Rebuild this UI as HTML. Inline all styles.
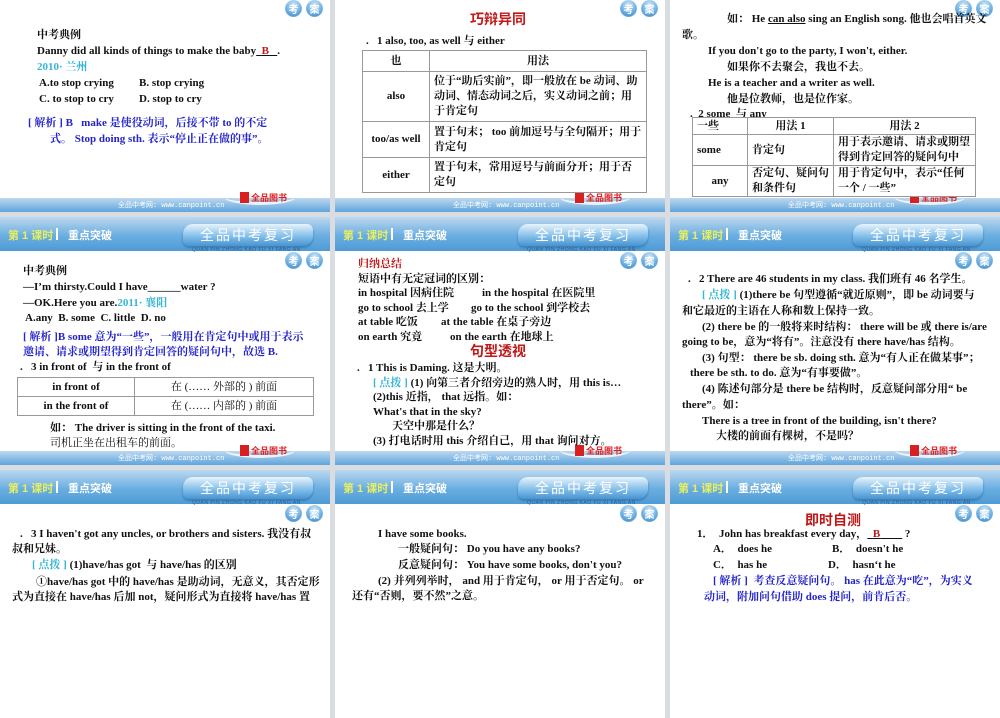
<!DOCTYPE html>
<html><head><meta charset="utf-8"><style>
body{margin:0;width:1000px;height:600px;overflow:hidden;background:#d9dde2;position:relative}
.s{position:absolute;background:#fff;overflow:hidden;width:330px}
.hd{position:absolute;left:0;top:0;width:330px;height:34px;background:linear-gradient(#bcd8ef,#6aaee0 55%,#4f9bd6)}
.hd .a{position:absolute;left:8px;top:10px;font:bold 11px "Liberation Sans","Noto Sans CJK SC",sans-serif;color:#e8f060}
.hd .b{position:absolute;left:68px;top:10px;font:bold 11px "Liberation Sans","Noto Sans CJK SC",sans-serif;color:#fff}
.hd .bar{position:absolute;left:56px;top:11px;width:2px;height:12px;background:#fff}
.pill{position:absolute;left:183px;top:7px;width:130px;height:22px;border-radius:10px 6px 10px 6px;background:linear-gradient(#e8f4fc,#7cbbe8 60%,#4a94d0);font:14px "Noto Sans CJK SC",sans-serif;color:#fff;text-align:center;line-height:22px;letter-spacing:2px;box-shadow:0 2px 2px #3a7fb8}
.sm{position:absolute;left:192px;top:30px;font:5px "Liberation Sans",sans-serif;color:#2a5f9a;letter-spacing:.5px}
.ic{position:absolute;width:17px;height:17px;border-radius:50%;background:radial-gradient(circle at 50% 30%,#d8ecfa,#6aaee2 55%,#2f7cc0);font:bold 10px "Noto Sans CJK SC",sans-serif;color:#fff;text-align:center;line-height:17px;box-shadow:0 0 1px #fff inset}
.ft{position:absolute;left:0;width:330px;height:14px;background:linear-gradient(#bcd8ef,#5fa5dd)}
.ft .u{position:absolute;left:118px;top:2px;font:7px "Liberation Mono","Noto Sans CJK SC",monospace;color:#fff}
.ft .lg{position:absolute;left:240px;top:-6px;width:50px;height:14px;font:bold 9px "Noto Sans CJK SC",sans-serif;color:#e02020;line-height:12px}
.ft .lg i{display:inline-block;width:9px;height:11px;background:#d82020;vertical-align:-2px;margin-right:2px}
.ft .w{position:absolute;left:225px;top:-8px;width:70px;height:12px;border-radius:50%;border-bottom:3px solid #fff;opacity:.8}
.t{position:absolute;white-space:nowrap;font:bold 11px/16px "Liberation Serif","Noto Serif CJK SC",serif;color:#111}
.r{color:#c01818;font:bold 14px/18px "Liberation Sans","Noto Sans CJK SC",sans-serif}
.bl{color:#2424c8}.cy{color:#35b5d5}
table{position:absolute;border-collapse:collapse;font:bold 11px/15px "Liberation Serif","Noto Serif CJK SC",serif;color:#111}
td{border:1px solid #999;padding:0 4px;vertical-align:middle}
</style></head><body>

<div class="s" style="left:0;top:-36px;height:248px"><div class="ft" style="top:234px"><div class="w"></div><div class="u">全品中考网: www.canpoint.cn</div><div class="lg"><i></i>全品图书</div></div></div>
<div class="s" style="left:335px;top:-36px;height:248px"><div class="ft" style="top:234px"><div class="w"></div><div class="u">全品中考网: www.canpoint.cn</div><div class="lg"><i></i>全品图书</div></div></div>
<div class="s" style="left:670px;top:-36px;height:248px"><div class="ft" style="top:234px"><div class="w"></div><div class="u">全品中考网: www.canpoint.cn</div><div class="lg"><i></i>全品图书</div></div></div>

<div class="s" style="left:0;top:217px;height:248px"><div class="hd"><span class="a">第 1 课时</span><span class="bar"></span><span class="b">重点突破</span><div class="pill">全品中考复习</div><div class="sm">QUAN PIN ZHONG KAO FU XI FANG AN</div></div><div class="ft" style="top:234px"><div class="w"></div><div class="u">全品中考网: www.canpoint.cn</div><div class="lg"><i></i>全品图书</div></div></div>
<div class="s" style="left:335px;top:217px;height:248px"><div class="hd"><span class="a">第 1 课时</span><span class="bar"></span><span class="b">重点突破</span><div class="pill">全品中考复习</div><div class="sm">QUAN PIN ZHONG KAO FU XI FANG AN</div></div><div class="ft" style="top:234px"><div class="w"></div><div class="u">全品中考网: www.canpoint.cn</div><div class="lg"><i></i>全品图书</div></div></div>
<div class="s" style="left:670px;top:217px;height:248px"><div class="hd"><span class="a">第 1 课时</span><span class="bar"></span><span class="b">重点突破</span><div class="pill">全品中考复习</div><div class="sm">QUAN PIN ZHONG KAO FU XI FANG AN</div></div><div class="ft" style="top:234px"><div class="w"></div><div class="u">全品中考网: www.canpoint.cn</div><div class="lg"><i></i>全品图书</div></div></div>

<div class="s" style="left:0;top:470px;height:248px"><div class="hd"><span class="a">第 1 课时</span><span class="bar"></span><span class="b">重点突破</span><div class="pill">全品中考复习</div><div class="sm">QUAN PIN ZHONG KAO FU XI FANG AN</div></div></div>
<div class="s" style="left:335px;top:470px;height:248px"><div class="hd"><span class="a">第 1 课时</span><span class="bar"></span><span class="b">重点突破</span><div class="pill">全品中考复习</div><div class="sm">QUAN PIN ZHONG KAO FU XI FANG AN</div></div></div>
<div class="s" style="left:670px;top:470px;height:248px"><div class="hd"><span class="a">第 1 课时</span><span class="bar"></span><span class="b">重点突破</span><div class="pill">全品中考复习</div><div class="sm">QUAN PIN ZHONG KAO FU XI FANG AN</div></div></div>

<div class="ic" style="left:285px;top:0">考</div><div class="ic" style="left:306px;top:0">案</div>
<div class="ic" style="left:620px;top:0">考</div><div class="ic" style="left:641px;top:0">案</div>
<div class="ic" style="left:955px;top:0">考</div><div class="ic" style="left:976px;top:0">案</div>
<div class="ic" style="left:285px;top:252px">考</div><div class="ic" style="left:306px;top:252px">案</div>
<div class="ic" style="left:620px;top:252px">考</div><div class="ic" style="left:641px;top:252px">案</div>
<div class="ic" style="left:955px;top:252px">考</div><div class="ic" style="left:976px;top:252px">案</div>
<div class="ic" style="left:285px;top:505px">考</div><div class="ic" style="left:306px;top:505px">案</div>
<div class="ic" style="left:620px;top:505px">考</div><div class="ic" style="left:641px;top:505px">案</div>
<div class="ic" style="left:955px;top:505px">考</div><div class="ic" style="left:976px;top:505px">案</div>

<div class="t" style="left:37px;top:27px">中考典例</div>
<div class="t" style="left:37px;top:43px">Danny did all kinds of things to make the baby<u>&nbsp;&nbsp;<span style="color:#c01818">B</span>&nbsp;&nbsp;&nbsp;</u>.</div>
<div class="t cy" style="left:37px;top:59px">2010· 兰州</div>
<div class="t" style="left:39px;top:75px">A.to stop crying</div><div class="t" style="left:139px;top:75px">B. stop crying</div>
<div class="t" style="left:39px;top:91px">C. to stop to cry</div><div class="t" style="left:139px;top:91px">D. stop to cry</div>
<div class="t bl" style="left:28px;top:115px">[ 解析 ] B&nbsp;&nbsp; make 是使役动词，后接不带 to 的不定</div>
<div class="t bl" style="left:50px;top:131px">式。 Stop doing sth. 表示“停止正在做的事”。</div>

<div class="t r" style="left:470px;top:10px">巧辩异同</div>
<div class="t" style="left:366px;top:33px">.&nbsp;&nbsp; 1 also, too, as well 与 either</div>
<table style="left:362px;top:50px;width:285px">
<tr style="height:21px"><td style="width:58px;text-align:center">也</td><td style="text-align:center">用法</td></tr>
<tr style="height:50px"><td style="text-align:center">also</td><td>位于“助后实前”，即一般放在 be 动词、助动词、情态动词之后，实义动词之前；用于肯定句</td></tr>
<tr style="height:36px"><td style="text-align:center">too/as well</td><td>置于句末； too 前加逗号与全句隔开；用于肯定句</td></tr>
<tr style="height:35px"><td style="text-align:center">either</td><td>置于句末，常用逗号与前面分开；用于否定句</td></tr>
</table>

<div class="t" style="left:727px;top:11px">如： He <u>can also</u> sing an English song. 他也会唱首英文</div>
<div class="t" style="left:682px;top:27px">歌。</div>
<div class="t" style="left:708px;top:43px">If you don't go to the party, I won't, either.</div>
<div class="t" style="left:727px;top:59px">如果你不去聚会，我也不去。</div>
<div class="t" style="left:708px;top:75px">He is a teacher and a writer as well.</div>
<div class="t" style="left:727px;top:91px">他是位教师，也是位作家。</div>
<div class="t" style="left:690px;top:106px">.&nbsp; 2 some&nbsp; 与 any</div>
<table style="left:692px;top:117px;width:284px;background:#fff">
<tr style="height:17px"><td style="width:46px">一些</td><td style="width:77px;text-align:center">用法 1</td><td style="text-align:center">用法 2</td></tr>
<tr style="height:30px"><td>some</td><td>肯定句</td><td>用于表示邀请、请求或期望得到肯定回答的疑问句中</td></tr>
<tr style="height:29px"><td style="text-align:center">any</td><td>否定句、疑问句和条件句</td><td>用于肯定句中，表示“任何一个 / 一些”</td></tr>
</table>

<div class="t" style="left:23px;top:263px">中考典例</div>
<div class="t" style="left:23px;top:279px">—I’m thirsty.Could I have______water ?</div>
<div class="t" style="left:23px;top:295px">—OK.Here you are.<span class="cy">2011· 襄阳</span></div>
<div class="t" style="left:25px;top:310px">A.any&nbsp; B. some&nbsp; C. little&nbsp; D. no</div>
<div class="t bl" style="left:23px;top:329px">[ 解析 ]B some 意为“一些”，一般用在肯定句中或用于表示</div>
<div class="t bl" style="left:23px;top:344px">邀请、请求或期望得到肯定回答的疑问句中，故选 B.</div>
<div class="t" style="left:20px;top:359px">.&nbsp;&nbsp; 3 in front of&nbsp; 与 in the front of</div>
<table style="left:17px;top:377px;width:297px">
<tr style="height:19px"><td style="width:108px;text-align:center">in front of</td><td style="text-align:center;font-weight:normal">在 (…… 外部的 ) 前面</td></tr>
<tr style="height:19px"><td style="text-align:center">in the front of</td><td style="text-align:center;font-weight:normal">在 (…… 内部的 ) 前面</td></tr>
</table>
<div class="t" style="left:50px;top:420px">如： The driver is sitting in the front of the taxi.</div>
<div class="t" style="left:50px;top:435px;font-weight:normal">司机正坐在出租车的前面。</div>

<div class="t" style="left:358px;top:256px;color:#c01818">归纳总结</div>
<div class="t" style="left:358px;top:271px">短语中有无定冠词的区别：</div>
<div class="t" style="left:358px;top:285px">in hospital 因病住院</div><div class="t" style="left:482px;top:285px">in the hospital 在医院里</div>
<div class="t" style="left:358px;top:300px">go to school 去上学</div><div class="t" style="left:471px;top:300px">go to the school 到学校去</div>
<div class="t" style="left:358px;top:314px">at table 吃饭</div><div class="t" style="left:441px;top:314px">at the table 在桌子旁边</div>
<div class="t" style="left:358px;top:329px">on earth 究竟</div><div class="t" style="left:450px;top:329px">on the earth 在地球上</div>
<div class="t r" style="left:470px;top:342px">句型透视</div>
<div class="t" style="left:357px;top:360px">.&nbsp;&nbsp; 1 This is Daming. 这是大明。</div>
<div class="t" style="left:373px;top:375px"><span class="cy">[ 点拨 ]</span> (1) 向第三者介绍旁边的熟人时，用 this is…</div>
<div class="t" style="left:373px;top:389px">(2)this 近指， that 远指。如：</div>
<div class="t" style="left:373px;top:404px">What's that in the sky?</div>
<div class="t" style="left:392px;top:418px">天空中那是什么？</div>
<div class="t" style="left:373px;top:433px">(3) 打电话时用 this 介绍自己，用 that 询问对方。</div>

<div class="t" style="left:688px;top:271px">.&nbsp;&nbsp; 2 There are 46 students in my class. 我们班有 46 名学生。</div>
<div class="t" style="left:702px;top:287px"><span class="cy">[ 点拨 ]</span> (1)there be 句型遵循“就近原则”，即 be 动词要与</div>
<div class="t" style="left:682px;top:303px">和它最近的主语在人称和数上保持一致。</div>
<div class="t" style="left:702px;top:319px">(2) there be 的一般将来时结构： there will be 或 there is/are</div>
<div class="t" style="left:682px;top:334px">going to be，意为“将有”。注意没有 there have/has 结构。</div>
<div class="t" style="left:702px;top:350px">(3) 句型： there be sb. doing sth. 意为“有人正在做某事”；</div>
<div class="t" style="left:690px;top:365px">there be sth. to do. 意为“有事要做”。</div>
<div class="t" style="left:702px;top:381px">(4) 陈述句部分是 there be 结构时，反意疑问部分用“ be</div>
<div class="t" style="left:682px;top:397px">there”。如：</div>
<div class="t" style="left:702px;top:413px">There is a tree in front of the building, isn't there?</div>
<div class="t" style="left:716px;top:428px">大楼的前面有棵树，不是吗？</div>

<div class="t" style="left:20px;top:526px">.&nbsp;&nbsp; 3 I haven't got any uncles, or brothers and sisters. 我没有叔</div>
<div class="t" style="left:12px;top:541px">叔和兄妹。</div>
<div class="t" style="left:32px;top:557px"><span class="cy">[ 点拨 ]</span> (1)have/has got&nbsp; 与 have/has 的区别</div>
<div class="t" style="left:36px;top:574px">①have/has got 中的 have/has 是助动词，无意义，其否定形</div>
<div class="t" style="left:12px;top:589px">式为直接在 have/has 后加 not，疑问形式为直接将 have/has 置</div>

<div class="t" style="left:378px;top:526px">I have some books.</div>
<div class="t" style="left:398px;top:541px">一般疑问句： Do you have any books?</div>
<div class="t" style="left:398px;top:557px">反意疑问句： You have some books, don't you?</div>
<div class="t" style="left:378px;top:573px">(2) 并列列举时， and 用于肯定句， or 用于否定句。 or</div>
<div class="t" style="left:352px;top:588px">还有“否则，要不然”之意。</div>

<div class="t r" style="left:805px;top:511px">即时自测</div>
<div class="t" style="left:697px;top:526px">1．&nbsp; John has breakfast every day，<u>&nbsp;&nbsp;<span style="color:#c01818">B</span>&nbsp;&nbsp;&nbsp;&nbsp;&nbsp;&nbsp;&nbsp;&nbsp;</u> ?</div>
<div class="t" style="left:713px;top:541px">A．&nbsp; does he</div><div class="t" style="left:832px;top:541px">B．&nbsp; doesn't he</div>
<div class="t" style="left:713px;top:557px">C．&nbsp; has he</div><div class="t" style="left:828px;top:557px">D．&nbsp; hasn‘t he</div>
<div class="t bl" style="left:713px;top:573px">[ 解析 ]&nbsp; 考查反意疑问句。 has 在此意为“吃”，为实义</div>
<div class="t bl" style="left:704px;top:589px">动词，附加问句借助 does 提问，前肯后否。</div>

</body></html>
